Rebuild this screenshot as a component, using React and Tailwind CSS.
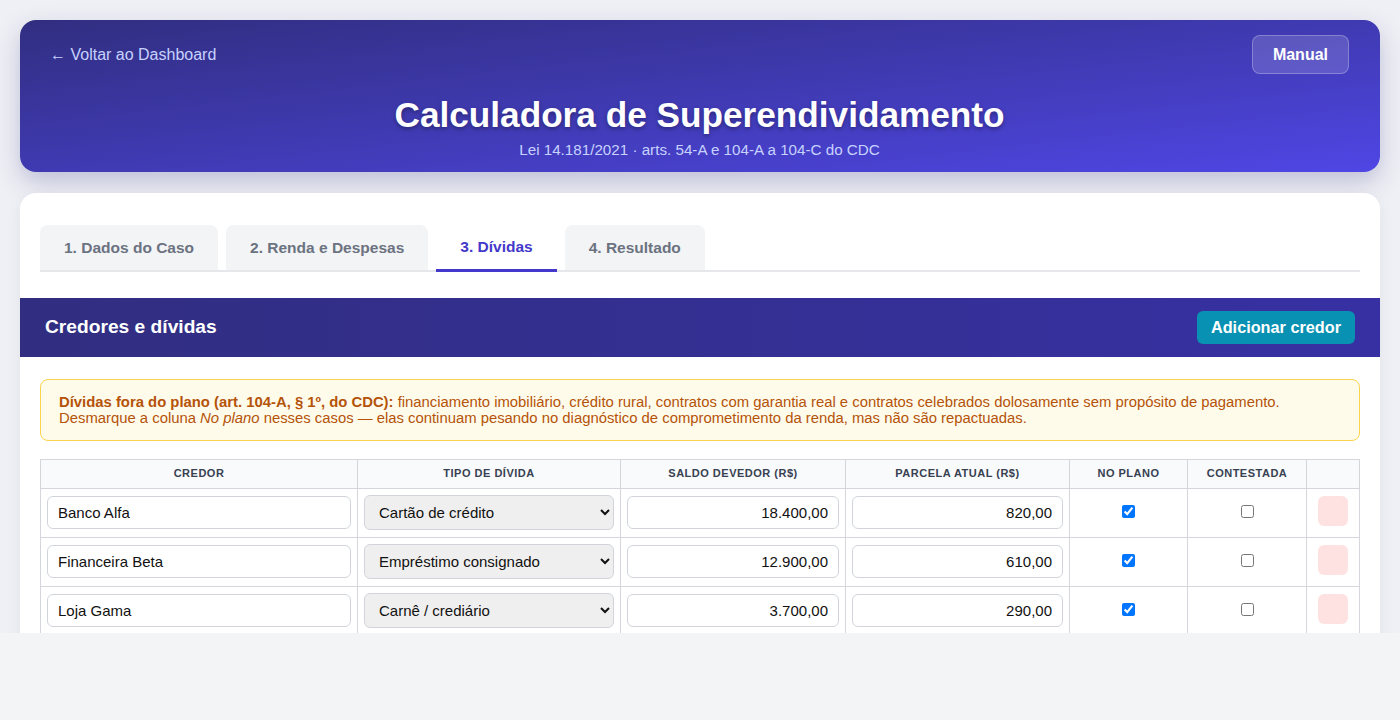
import React from 'react';

const TABS = ['1. Dados do Caso', '2. Renda e Despesas', '3. Dívidas', '4. Resultado'];

const DEBTS = [
  { credor: 'Banco Alfa', tipo: 'Cartão de crédito', saldo: '18.400,00', parcela: '820,00' },
  { credor: 'Financeira Beta', tipo: 'Empréstimo consignado', saldo: '12.900,00', parcela: '610,00' },
  { credor: 'Loja Gama', tipo: 'Carnê / crediário', saldo: '3.700,00', parcela: '290,00' },
];

const TIPOS = ['Cartão de crédito', 'Empréstimo consignado', 'Carnê / crediário', 'Cheque especial', 'Outros'];

const inputCls =
  'w-full h-[33px] rounded-md border border-[#d1d5db] bg-white px-[10px] text-[15px] text-[#111] outline-none';

export default function App() {
  return (
    <div className="min-h-screen bg-[#f3f4f6] font-['Liberation_Sans',Arial,sans-serif]">
      <div className="h-[633px] overflow-hidden bg-[#eff0f5] p-5">
        {/* header */}
        <header className="rounded-2xl bg-gradient-to-br from-[#312e81] to-[#4f46e5] pt-[15px] pr-[31px] pb-3 pl-[30px] text-white shadow-[0_10px_25px_rgba(49,46,129,0.25)]">
          <div className="flex h-[39px] items-center justify-between">
            <a className="text-base text-[#c7d2fe]">← Voltar ao Dashboard</a>
            <button className="h-[39px] rounded-lg border border-white/25 bg-white/15 px-5 text-base font-bold text-white">
              Manual
            </button>
          </div>
          <h1 className="mt-[21px] text-center text-[35.2px] leading-10 font-bold [text-shadow:0_2px_4px_rgba(0,0,0,0.35)]">
            Calculadora de Superendividamento
          </h1>
          <p className="mt-[5px] text-center text-[15.2px] leading-5 text-[#c7d2fe]">
            Lei 14.181/2021 · arts. 54-A e 104-A a 104-C do CDC
          </p>
        </header>

        {/* card */}
        <main className="mt-[21px] rounded-2xl bg-white pt-8 pb-10 shadow-[0_4px_16px_rgba(0,0,0,0.06)]">
          <nav className="mx-5 flex gap-2 border-b-2 border-[#e5e7eb]">
            {TABS.map((t, i) =>
              i === 2 ? (
                <div
                  key={t}
                  className="-mb-[2px] flex h-[47px] items-center border-b-[3px] border-[#4338ca] px-6 text-[15.5px] font-bold text-[#4338ca]"
                >
                  {t}
                </div>
              ) : (
                <div
                  key={t}
                  className="flex h-[45px] items-center rounded-t-lg bg-[#f3f4f6] px-6 text-[15.5px] font-bold text-[#6b7280]"
                >
                  {t}
                </div>
              )
            )}
          </nav>

          <section className="mt-[26px]">
            <div className="flex h-[59px] items-center justify-between bg-gradient-to-r from-[#312e81] to-[#3730a3] px-[25px]">
              <h2 className="text-[19.2px] font-bold text-white">Credores e dívidas</h2>
              <button className="h-[33px] rounded-md bg-[#0891b2] px-[14px] text-[16.25px] font-bold text-white">
                Adicionar credor
              </button>
            </div>

            <div className="px-5 pt-[22px]">
              <div className="rounded-lg border border-[#fcd34d] bg-[#fffbeb] px-[18px] py-[14px] text-[14.85px] leading-4 text-[#b45309]">
                <strong>Dívidas fora do plano (art. 104-A, § 1º, do CDC):</strong> financiamento imobiliário, crédito
                rural, contratos com garantia real e contratos celebrados dolosamente sem propósito de pagamento.
                <br />
                Desmarque a coluna <em>No plano</em> nesses casos — elas continuam pesando no diagnóstico de
                comprometimento da renda, mas não são repactuadas.
              </div>

              <table className="mt-[18px] w-full border-collapse text-sm">
                <thead>
                  <tr className="bg-[#f8fafc] text-[11px] font-bold tracking-[0.5px] text-[#374151] uppercase">
                    <th className="h-[29px] w-[317px] border border-[#d4d6dc]">Credor</th>
                    <th className="w-[263px] border border-[#d4d6dc]">Tipo de dívida</th>
                    <th className="w-[225px] border border-[#d4d6dc]">Saldo devedor (R$)</th>
                    <th className="w-[224px] border border-[#d4d6dc]">Parcela atual (R$)</th>
                    <th className="w-[118px] border border-[#d4d6dc]">No plano</th>
                    <th className="w-[119px] border border-[#d4d6dc]">Contestada</th>
                    <th className="border border-[#d4d6dc]"></th>
                  </tr>
                </thead>
                <tbody>
                  {DEBTS.map((d) => (
                    <tr key={d.credor}>
                      <td className="h-[49px] border border-[#d4d6dc] px-[6px] pb-px">
                        <input className={inputCls} defaultValue={d.credor} />
                      </td>
                      <td className="border border-[#d4d6dc] px-[6px] pb-px">
                        <select
                          className="h-[35px] w-full rounded-md border border-[#d1d5db] bg-[#efefef] pl-[10px] text-[15px] text-[#111]"
                          defaultValue={d.tipo}
                        >
                          {TIPOS.map((o) => (
                            <option key={o}>{o}</option>
                          ))}
                        </select>
                      </td>
                      <td className="border border-[#d4d6dc] px-[6px] pb-px">
                        <input className={inputCls + ' text-right'} defaultValue={d.saldo} />
                      </td>
                      <td className="border border-[#d4d6dc] px-[6px] pb-px">
                        <input className={inputCls + ' text-right'} defaultValue={d.parcela} />
                      </td>
                      <td className="border border-[#d4d6dc]">
                        <input type="checkbox" defaultChecked className="mx-auto my-0 block -translate-y-[2px]" />
                      </td>
                      <td className="border border-[#d4d6dc]">
                        <input type="checkbox" className="mx-auto my-0 block -translate-y-[2px]" />
                      </td>
                      <td className="border border-[#d4d6dc] text-center">
                        <button className="inline-block h-[30px] w-[30px] -translate-y-[2px] rounded-md bg-[#fee2e2] align-middle"></button>
                      </td>
                    </tr>
                  ))}
                </tbody>
              </table>
            </div>
          </section>
        </main>
      </div>
    </div>
  );
}
